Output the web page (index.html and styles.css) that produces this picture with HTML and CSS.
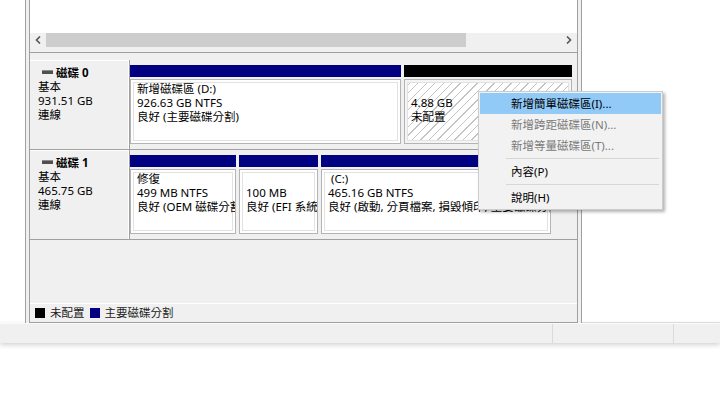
FILE: index.html
```html
<!DOCTYPE html>
<html lang="zh-TW">
<head>
    <meta charset="UTF-8">
    <title>磁碟管理</title>
    <link rel="stylesheet" href="styles.css">
</head>
<body>
    <div class="screen">
        <div class="workspace">
            <div class="gutter"></div>

            <div class="console">
                <!-- 上方磁碟區清單 -->
                <div class="volume-list">
                    <div class="list-body"></div>
                    <div class="hscroll">
                        <div class="scroll-btn">
                            <svg width="6" height="8" viewBox="0 0 6 8"><polyline points="5,0.5 1.5,4 5,7.5" fill="none" stroke="#555" stroke-width="1.6"/></svg>
                        </div>
                        <div class="scroll-track"><div class="scroll-thumb"></div></div>
                        <div class="scroll-btn">
                            <svg width="6" height="8" viewBox="0 0 6 8"><polyline points="1,0.5 4.5,4 1,7.5" fill="none" stroke="#555" stroke-width="1.6"/></svg>
                        </div>
                    </div>
                </div>

                <!-- 下方圖形檢視 -->
                <div class="disk-view">
                    <div class="disk">
                        <div class="disk-label">
                            <div class="disk-name"><span class="disk-icon"></span>磁碟 0</div>
                            <div>基本</div>
                            <div>931.51 GB</div>
                            <div>連線</div>
                        </div>
                        <div class="partitions">
                            <div class="part" style="width: 271px">
                                <div class="part-bar"></div>
                                <div class="part-box">
                                    <div>新增磁碟區 (D:)</div>
                                    <div>926.63 GB NTFS</div>
                                    <div>良好 (主要磁碟分割)</div>
                                </div>
                            </div>
                            <div class="part" style="width: 168px">
                                <div class="part-bar unallocated"></div>
                                <div class="part-box hatched">
                                    <div>&nbsp;</div>
                                    <div>4.88 GB</div>
                                    <div>未配置</div>
                                </div>
                            </div>
                        </div>
                    </div>

                    <div class="disk">
                        <div class="disk-label">
                            <div class="disk-name"><span class="disk-icon"></span>磁碟 1</div>
                            <div>基本</div>
                            <div>465.75 GB</div>
                            <div>連線</div>
                        </div>
                        <div class="partitions">
                            <div class="part" style="width: 106px">
                                <div class="part-bar"></div>
                                <div class="part-box">
                                    <div>修復</div>
                                    <div>499 MB NTFS</div>
                                    <div>良好 (OEM 磁碟分割)</div>
                                </div>
                            </div>
                            <div class="part" style="width: 79px">
                                <div class="part-bar"></div>
                                <div class="part-box">
                                    <div>&nbsp;</div>
                                    <div>100 MB</div>
                                    <div>良好 (EFI 系統磁碟分割)</div>
                                </div>
                            </div>
                            <div class="part" style="width: 230px">
                                <div class="part-bar"></div>
                                <div class="part-box">
                                    <div>&nbsp;(C:)</div>
                                    <div>465.16 GB NTFS</div>
                                    <div>良好 (啟動, 分頁檔案, 損毀傾印, 主要磁碟分割)</div>
                                </div>
                            </div>
                        </div>
                    </div>

                    <div class="legend">
                        <span class="swatch unallocated"></span>
                        <span>未配置</span>
                        <span class="swatch primary"></span>
                        <span>主要磁碟分割</span>
                    </div>
                </div>
            </div>

            <div class="side"></div>
        </div>

        <div class="statusbar">
            <div class="status-cell first"></div>
            <div class="status-cell second"></div>
            <div class="status-cell"></div>
        </div>

        <!-- 右鍵選單 -->
        <div class="menu">
            <div class="menu-item active">新增簡單磁碟區(I)...</div>
            <div class="menu-item disabled">新增跨距磁碟區(N)...</div>
            <div class="menu-item disabled">新增等量磁碟區(T)...</div>
            <div class="menu-sep"></div>
            <div class="menu-item">內容(P)</div>
            <div class="menu-sep"></div>
            <div class="menu-item">說明(H)</div>
        </div>
    </div>
</body>
</html>
```

FILE: styles.css
```css
* {
    margin: 0;
    padding: 0;
    box-sizing: border-box;
}

body {
    width: 720px;
    height: 393px;
    overflow: hidden;
    background-color: #fff;
    font-family: "Noto Sans", "Noto Sans CJK TC", sans-serif;
    font-size: 11.5px;
    line-height: 14px;
    color: #000;
}

.screen {
    position: relative;
    height: 393px;
}

.workspace {
    display: flex;
    height: 323px;
}

.gutter {
    width: 25px;
}

.console {
    width: 557px;
    display: flex;
    flex-direction: column;
    padding: 0 3px;
    background-color: #f0f0f0;
    border-left: 1px solid #a0a0a0;
    border-right: 1px solid #a0a0a0;
}

.side {
    flex: 1;
    border-bottom: 1px solid #dcdcdc;
}

/* 清單 + 捲軸 */
.volume-list {
    height: 53px;
    display: flex;
    flex-direction: column;
    border: 1px solid #a0a0a0;
    border-top: none;
}

.list-body {
    height: 33px;
    background-color: #fff;
}

.hscroll {
    height: 14px;
    display: flex;
    background-color: #f0f0f0;
}

.scroll-btn {
    width: 16px;
    display: flex;
    align-items: center;
    justify-content: center;
}

.scroll-track {
    flex: 1;
}

.scroll-thumb {
    width: 420px;
    height: 14px;
    background-color: #cdcdcd;
}

/* 圖形檢視 */
.disk-view {
    flex: 1;
    display: flex;
    flex-direction: column;
    padding-top: 7px;
    border: 1px solid #a0a0a0;
    border-top: none;
}

.disk {
    height: 90px;
    display: flex;
    border-bottom: 1px solid #a0a0a0;
}

.disk-label {
    width: 100px;
    padding: 6px 0 0 8px;
    border-right: 1px solid #a0a0a0;
    box-shadow: inset -1px 0 #fff, inset 0 1px #fff;
}

.disk-name {
    font-weight: bold;
}

.disk-icon {
    display: inline-block;
    width: 11px;
    height: 4px;
    margin: 0 3px 0 4px;
    vertical-align: 3px;
    background-color: #505050;
    border-top: 1px solid #8a8a8a;
}

.partitions {
    display: flex;
    gap: 3px;
    padding-top: 5px;
}

.part {
    display: flex;
    flex-direction: column;
    gap: 2px;
}

.part-bar {
    height: 12px;
    background-color: #000080;
}

.part-bar.unallocated {
    background-color: #000;
}

.part-box {
    height: 65px;
    padding: 2px 6px;
    background-color: #fff;
    border: 1px solid #b4b4b4;
    box-shadow: inset 0 0 0 2px #fff, inset 0 0 0 3px #e2e2e2;
    white-space: nowrap;
    overflow: hidden;
}

.part-box.hatched {
    background: repeating-linear-gradient(135deg, #fff 0 5px, #c4c4c4 5px 6px);
    box-shadow: inset 0 0 0 2px #f4f4f4, inset 0 0 0 3px #e2e2e2;
}

.legend {
    margin-top: auto;
    height: 19px;
    display: flex;
    align-items: center;
    gap: 5px;
    padding-left: 5px;
    border-top: 1px solid #fff;
    color: #222;
}

.swatch {
    width: 10px;
    height: 10px;
}

.swatch.unallocated {
    background-color: #000;
}

.swatch.primary {
    background-color: #000080;
}

/* 狀態列 */
.statusbar {
    height: 20px;
    display: flex;
    background-color: #f0f0f0;
    border-top: 1px solid #fafafa;
    box-shadow: 0 2px 5px rgba(0, 0, 0, 0.18);
}

.status-cell {
    flex: 1;
}

.status-cell.first {
    flex: none;
    width: 553px;
    border-right: 1px solid #dadada;
}

.status-cell.second {
    flex: none;
    width: 121px;
    border-right: 1px solid #dadada;
}

/* 右鍵選單 */
.menu {
    position: absolute;
    left: 478px;
    top: 91px;
    width: 185px;
    padding: 1px;
    background-color: #f2f2f2;
    border: 1px solid #cccccc;
    box-shadow: 2px 2px 3px rgba(0, 0, 0, 0.3);
}

.menu-item {
    height: 21px;
    line-height: 21px;
    padding-left: 31px;
    white-space: nowrap;
}

.menu-item.active {
    background-color: #91c9f7;
}

.menu-item.disabled {
    color: #7a7a7a;
}

.menu-sep {
    height: 5px;
    margin: 0 2px 0 26px;
    border-top: 2px solid transparent;
    border-bottom: 2px solid transparent;
    background-color: #d7d7d7;
    background-clip: padding-box;
}
```
